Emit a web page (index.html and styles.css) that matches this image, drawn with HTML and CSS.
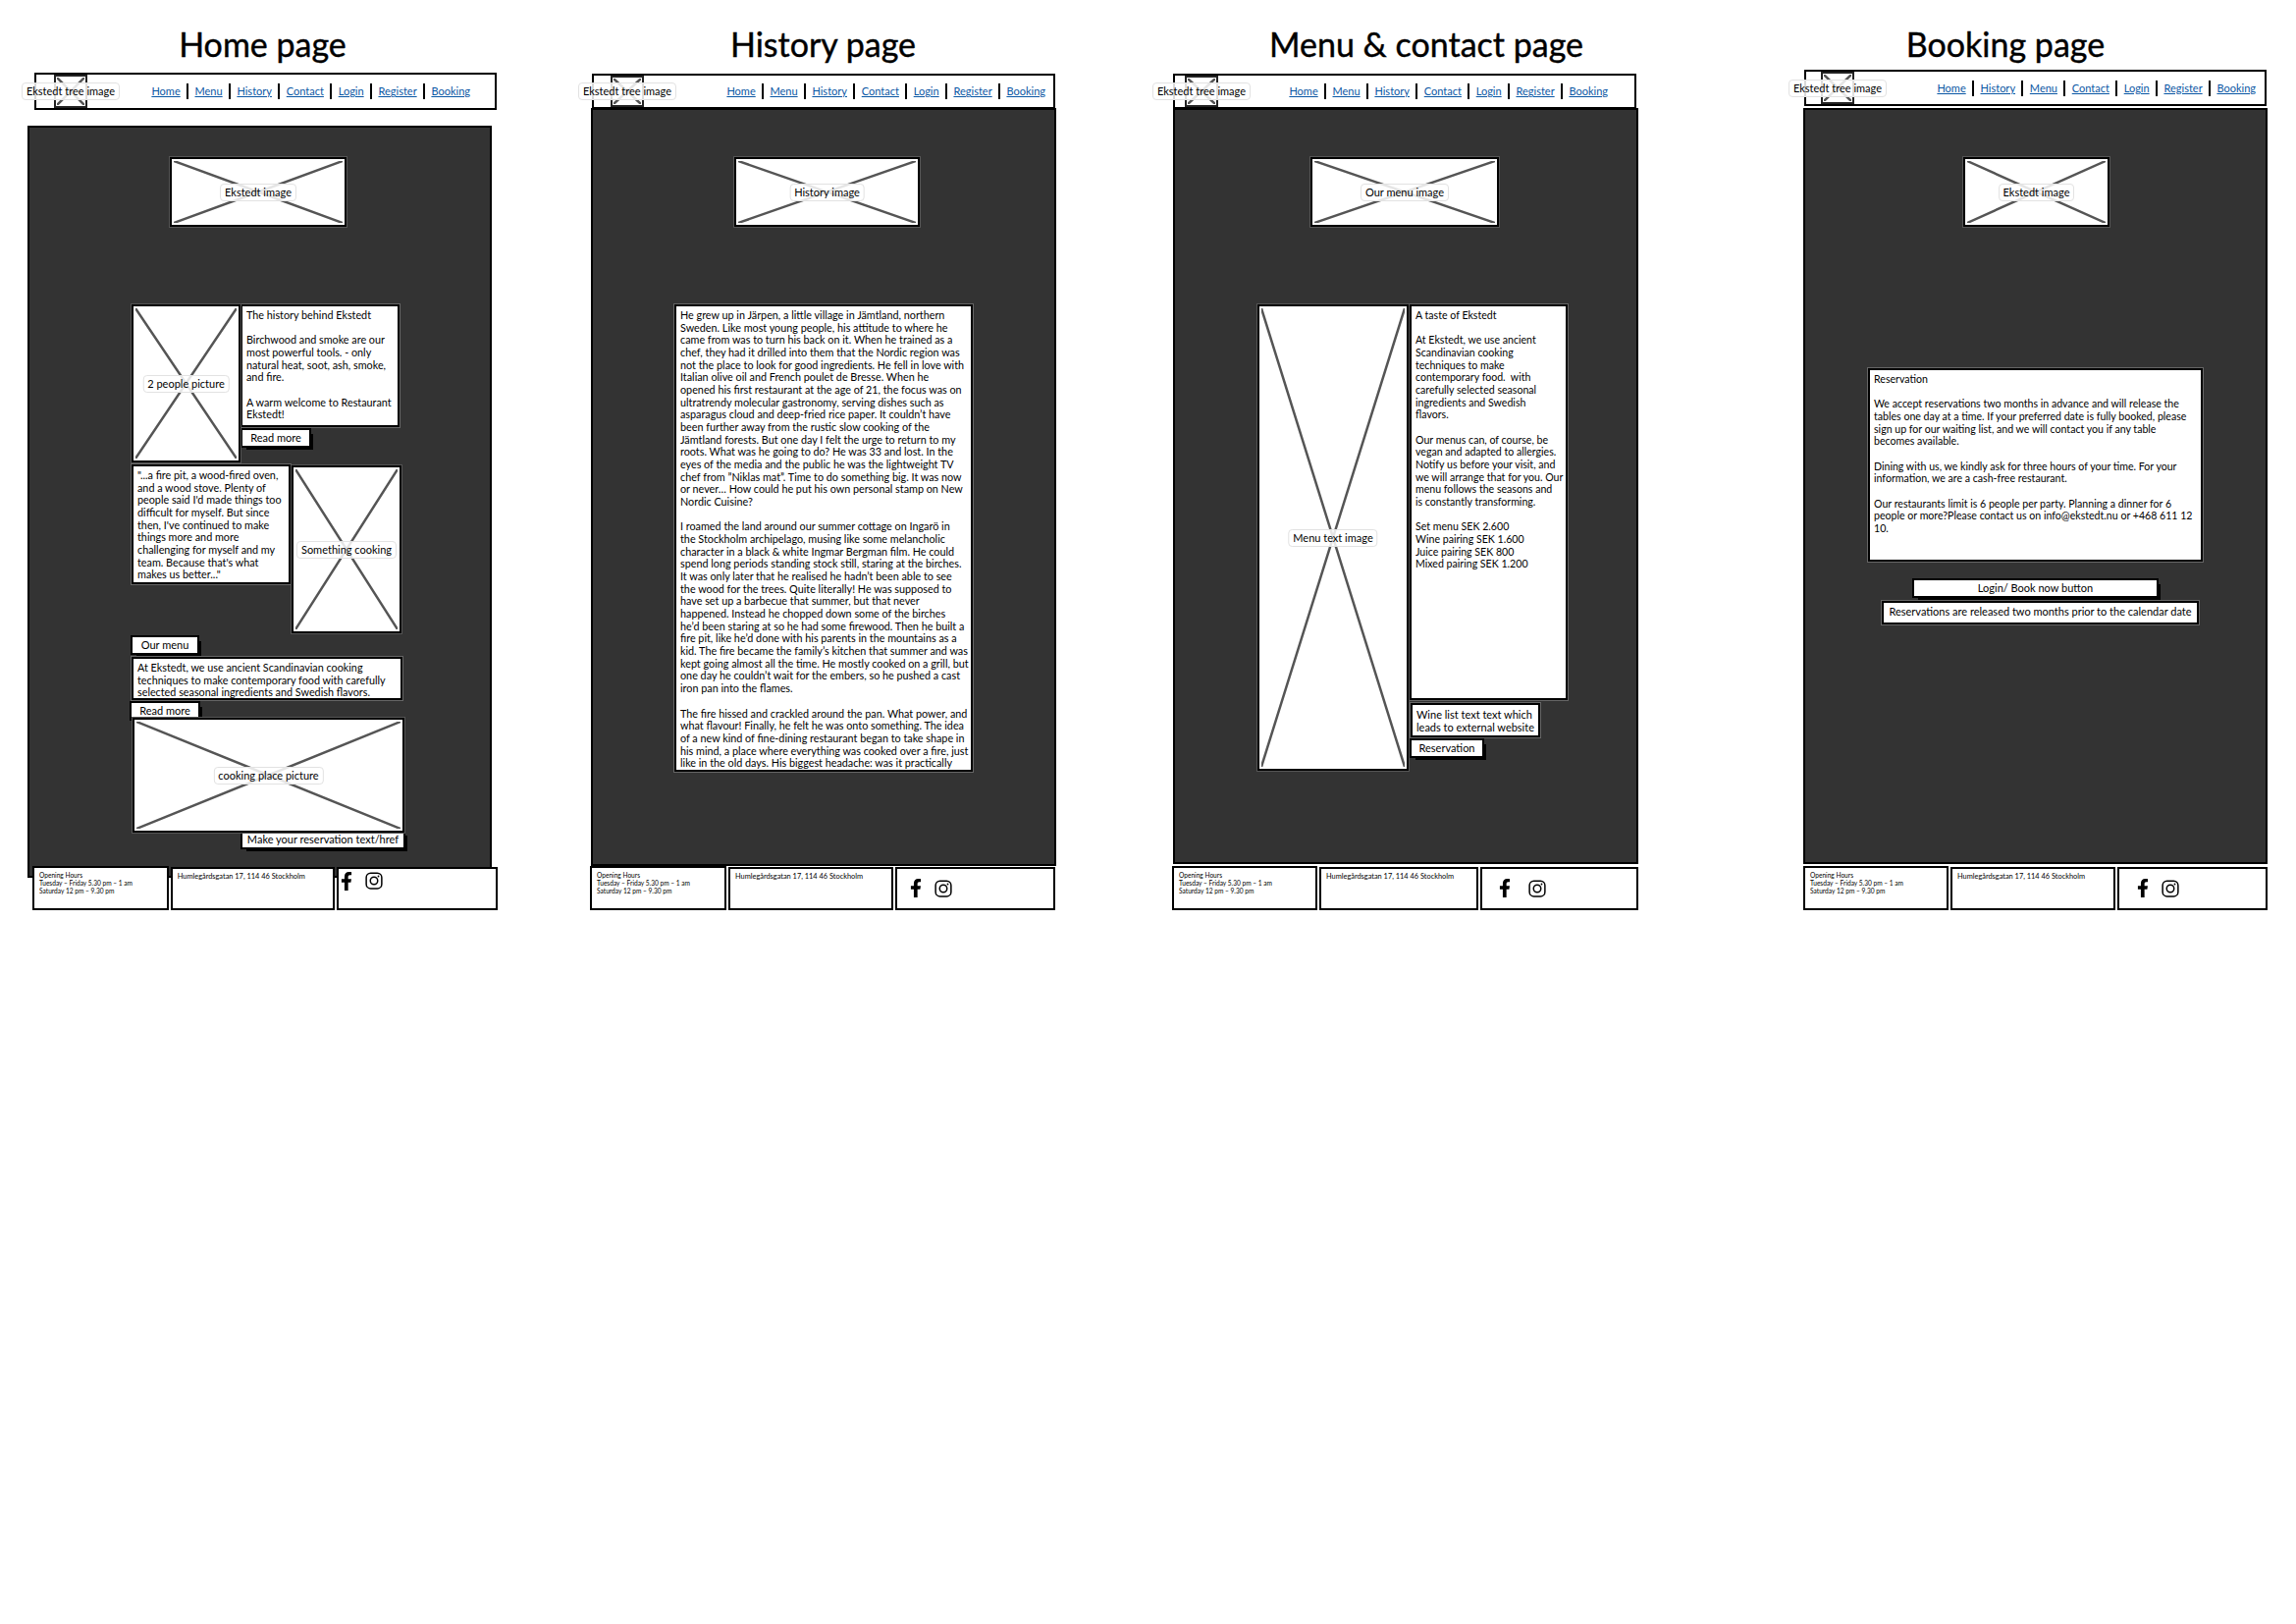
FILE: index.html
```html
<!DOCTYPE html>
<html lang="en">
<head>
    <meta charset="UTF-8">
    <meta name="viewport" content="width=device-width, initial-scale=1.0">
    <title>Ekstedt wireframes</title>
    <link rel="stylesheet" href="styles.css">
</head>
<body>
<div class="board">

    <!-- home -->
    <section class="screen screen-home">
        <h1 class="page-title">Home page</h1>
        <nav class="nav">
            <div class="logo">
                <svg class="cross" viewBox="0 0 100 100" preserveAspectRatio="none"><path d="M0 0 100 100M100 0 0 100"/></svg>
                <span class="ph-label">Ekstedt tree image</span>
            </div>
            <div class="nav-links">
                <a href="#">Home</a><a href="#">Menu</a><a href="#">History</a><a href="#">Contact</a><a href="#">Login</a><a href="#">Register</a><a href="#">Booking</a>
            </div>
        </nav>
        <main class="main">
            <div class="ph hero">
                <svg class="cross" viewBox="0 0 100 100" preserveAspectRatio="none"><path d="M0 0 100 100M100 0 0 100"/></svg>
                <span class="ph-label">Ekstedt image</span>
            </div>
            <div class="home-col">
                <div class="row row-history">
                    <div class="ph people">
                        <svg class="cross" viewBox="0 0 100 100" preserveAspectRatio="none"><path d="M0 0 100 100M100 0 0 100"/></svg>
                        <span class="ph-label">2 people picture</span>
                    </div>
                    <div>
                        <div class="box card-history">The history behind Ekstedt<br><br>Birchwood and smoke are our<br>most powerful tools. - only<br>natural heat, soot, ash, smoke,<br>and fire.<br><br>A warm welcome to Restaurant<br>Ekstedt!</div>
                        <div class="btn btn-read">Read more</div>
                    </div>
                </div>
                <div class="row row-quote">
                    <div class="box card-quote">"...a fire pit, a wood-fired oven,<br>and a wood stove. Plenty of<br>people said I'd made things too<br>difficult for myself. But since<br>then, I've continued to make<br>things more and more<br>challenging for myself and my<br>team. Because that's what<br>makes us better..."</div>
                    <div class="ph cooking">
                        <svg class="cross" viewBox="0 0 100 100" preserveAspectRatio="none"><path d="M0 0 100 100M100 0 0 100"/></svg>
                        <span class="ph-label">Something cooking</span>
                    </div>
                </div>
                <div class="btn btn-menu">Our menu</div>
                <div class="box card-menu">At Ekstedt, we use ancient Scandinavian cooking<br>techniques to make contemporary food with carefully<br>selected seasonal ingredients and Swedish flavors.</div>
                <div class="btn btn-read2">Read more</div>
                <div class="ph place">
                    <svg class="cross" viewBox="0 0 100 100" preserveAspectRatio="none"><path d="M0 0 100 100M100 0 0 100"/></svg>
                    <span class="ph-label">cooking place picture</span>
                </div>
                <div class="btn btn-reserve">Make your reservation text/href</div>
            </div>
        </main>
        <footer class="footer">
            <div class="foot-box foot-hours">Opening Hours<br>Tuesday – Friday 5.30 pm – 1 am<br>Saturday 12 pm – 9.30 pm</div>
            <div class="foot-box foot-address">Humlegårdsgatan 17, 114 46 Stockholm</div>
            <div class="foot-box foot-social">
                <svg class="icon-f" viewBox="0 0 320 512"><path d="M279.14 288l14.22-92.66h-88.91v-60.13c0-25.35 12.42-50.06 52.24-50.06h40.42V6.26S260.43 0 225.36 0c-73.22 0-121.08 44.38-121.08 124.72v70.62H22.89V288h81.39v224h100.17V288z"/></svg>
                <svg class="icon-ig" viewBox="0 0 24 24"><rect x="1.5" y="1.5" width="21" height="21" rx="6"/><circle cx="12" cy="12" r="5"/><circle class="ig-dot" cx="18" cy="6" r="1.2"/></svg>
            </div>
        </footer>
    </section>

    <!-- history -->
    <section class="screen screen-history">
        <h1 class="page-title">History page</h1>
        <nav class="nav">
            <div class="logo">
                <svg class="cross" viewBox="0 0 100 100" preserveAspectRatio="none"><path d="M0 0 100 100M100 0 0 100"/></svg>
                <span class="ph-label">Ekstedt tree image</span>
            </div>
            <div class="nav-links">
                <a href="#">Home</a><a href="#">Menu</a><a href="#">History</a><a href="#">Contact</a><a href="#">Login</a><a href="#">Register</a><a href="#">Booking</a>
            </div>
        </nav>
        <main class="main">
            <div class="ph hero">
                <svg class="cross" viewBox="0 0 100 100" preserveAspectRatio="none"><path d="M0 0 100 100M100 0 0 100"/></svg>
                <span class="ph-label">History image</span>
            </div>
            <div class="box card-story">He grew up in Järpen, a little village in Jämtland, northern<br>Sweden. Like most young people, his attitude to where he<br>came from was to turn his back on it. When he trained as a<br>chef, they had it drilled into them that the Nordic region was<br>not the place to look for good ingredients. He fell in love with<br>Italian olive oil and French poulet de Bresse. When he<br>opened his first restaurant at the age of 21, the focus was on<br>ultratrendy molecular gastronomy, serving dishes such as<br>asparagus cloud and deep-fried rice paper. It couldn’t have<br>been further away from the rustic slow cooking of the<br>Jämtland forests. But one day I felt the urge to return to my<br>roots. What was he going to do? He was 33 and lost. In the<br>eyes of the media and the public he was the lightweight TV<br>chef from ”Niklas mat”. Time to do something big. It was now<br>or never… How could he put his own personal stamp on New<br>Nordic Cuisine?<br><br>I roamed the land around our summer cottage on Ingarö in<br>the Stockholm archipelago, musing like some melancholic<br>character in a black &amp; white Ingmar Bergman film. He could<br>spend long periods standing stock still, staring at the birches.<br>It was only later that he realised he hadn’t been able to see<br>the wood for the trees. Quite literally! He was supposed to<br>have set up a barbecue that summer, but that never<br>happened. Instead he chopped down some of the birches<br>he’d been staring at so he had some firewood. Then he built a<br>fire pit, like he’d done with his parents in the mountains as a<br>kid. The fire became the family’s kitchen that summer and was<br>kept going almost all the time. He mostly cooked on a grill, but<br>one day he couldn’t wait for the embers, so he pushed a cast<br>iron pan into the flames.<br><br>The fire hissed and crackled around the pan. What power, and<br>what flavour! Finally, he felt he was onto something. The idea<br>of a new kind of fine-dining restaurant began to take shape in<br>his mind, a place where everything was cooked over a fire, just<br>like in the old days. His biggest headache: was it practically</div>
        </main>
        <footer class="footer">
            <div class="foot-box foot-hours">Opening Hours<br>Tuesday – Friday 5.30 pm – 1 am<br>Saturday 12 pm – 9.30 pm</div>
            <div class="foot-box foot-address">Humlegårdsgatan 17, 114 46 Stockholm</div>
            <div class="foot-box foot-social">
                <svg class="icon-f" viewBox="0 0 320 512"><path d="M279.14 288l14.22-92.66h-88.91v-60.13c0-25.35 12.42-50.06 52.24-50.06h40.42V6.26S260.43 0 225.36 0c-73.22 0-121.08 44.38-121.08 124.72v70.62H22.89V288h81.39v224h100.17V288z"/></svg>
                <svg class="icon-ig" viewBox="0 0 24 24"><rect x="1.5" y="1.5" width="21" height="21" rx="6"/><circle cx="12" cy="12" r="5"/><circle class="ig-dot" cx="18" cy="6" r="1.2"/></svg>
            </div>
        </footer>
    </section>

    <!-- menu and contact -->
    <section class="screen screen-menu">
        <h1 class="page-title">Menu &amp; contact page</h1>
        <nav class="nav">
            <div class="logo">
                <svg class="cross" viewBox="0 0 100 100" preserveAspectRatio="none"><path d="M0 0 100 100M100 0 0 100"/></svg>
                <span class="ph-label">Ekstedt tree image</span>
            </div>
            <div class="nav-links">
                <a href="#">Home</a><a href="#">Menu</a><a href="#">History</a><a href="#">Contact</a><a href="#">Login</a><a href="#">Register</a><a href="#">Booking</a>
            </div>
        </nav>
        <main class="main">
            <div class="ph hero">
                <svg class="cross" viewBox="0 0 100 100" preserveAspectRatio="none"><path d="M0 0 100 100M100 0 0 100"/></svg>
                <span class="ph-label">Our menu image</span>
            </div>
            <div class="row row-taste">
                <div class="ph menu-pic">
                    <svg class="cross" viewBox="0 0 100 100" preserveAspectRatio="none"><path d="M0 0 100 100M100 0 0 100"/></svg>
                    <span class="ph-label">Menu text image</span>
                </div>
                <div class="taste-col">
                    <div class="box card-taste">A taste of Ekstedt<br><br>At Ekstedt, we use ancient<br>Scandinavian cooking<br>techniques to make<br>contemporary food.&nbsp; with<br>carefully selected seasonal<br>ingredients and Swedish<br>flavors.<br><br>Our menus can, of course, be<br>vegan and adapted to allergies.<br>Notify us before your visit, and<br>we will arrange that for you. Our<br>menu follows the seasons and<br>is constantly transforming.<br><br>Set menu SEK 2.600<br>Wine pairing SEK 1.600<br>Juice pairing SEK 800<br>Mixed pairing SEK 1.200</div>
                    <div class="box card-wine">Wine list text text which<br>leads to external website</div>
                    <div class="btn btn-booking">Reservation</div>
                </div>
            </div>
        </main>
        <footer class="footer">
            <div class="foot-box foot-hours">Opening Hours<br>Tuesday – Friday 5.30 pm – 1 am<br>Saturday 12 pm – 9.30 pm</div>
            <div class="foot-box foot-address">Humlegårdsgatan 17, 114 46 Stockholm</div>
            <div class="foot-box foot-social">
                <svg class="icon-f" viewBox="0 0 320 512"><path d="M279.14 288l14.22-92.66h-88.91v-60.13c0-25.35 12.42-50.06 52.24-50.06h40.42V6.26S260.43 0 225.36 0c-73.22 0-121.08 44.38-121.08 124.72v70.62H22.89V288h81.39v224h100.17V288z"/></svg>
                <svg class="icon-ig" viewBox="0 0 24 24"><rect x="1.5" y="1.5" width="21" height="21" rx="6"/><circle cx="12" cy="12" r="5"/><circle class="ig-dot" cx="18" cy="6" r="1.2"/></svg>
            </div>
        </footer>
    </section>

    <!-- booking -->
    <section class="screen screen-booking">
        <h1 class="page-title">Booking page</h1>
        <nav class="nav">
            <div class="logo">
                <svg class="cross" viewBox="0 0 100 100" preserveAspectRatio="none"><path d="M0 0 100 100M100 0 0 100"/></svg>
                <span class="ph-label">Ekstedt tree image</span>
            </div>
            <div class="nav-links">
                <a href="#">Home</a><a href="#">History</a><a href="#">Menu</a><a href="#">Contact</a><a href="#">Login</a><a href="#">Register</a><a href="#">Booking</a>
            </div>
        </nav>
        <main class="main">
            <div class="ph hero">
                <svg class="cross" viewBox="0 0 100 100" preserveAspectRatio="none"><path d="M0 0 100 100M100 0 0 100"/></svg>
                <span class="ph-label">Ekstedt image</span>
            </div>
            <div class="box card-reservation">Reservation<br><br>We accept reservations two months in advance and will release the<br>tables one day at a time. If your preferred date is fully booked, please<br>sign up for our waiting list, and we will contact you if any table<br>becomes available.<br><br>Dining with us, we kindly ask for three hours of your time. For your<br>information, we are a cash-free restaurant.<br><br>Our restaurants limit is 6 people per party. Planning a dinner for 6<br>people or more?Please contact us on info@ekstedt.nu or +468 611 12<br>10.</div>
            <div class="btn btn-login">Login/ Book now button</div>
            <div class="box card-notice">Reservations are released two months prior to the calendar date</div>
        </main>
        <footer class="footer">
            <div class="foot-box foot-hours">Opening Hours<br>Tuesday – Friday 5.30 pm – 1 am<br>Saturday 12 pm – 9.30 pm</div>
            <div class="foot-box foot-address">Humlegårdsgatan 17, 114 46 Stockholm</div>
            <div class="foot-box foot-social">
                <svg class="icon-f" viewBox="0 0 320 512"><path d="M279.14 288l14.22-92.66h-88.91v-60.13c0-25.35 12.42-50.06 52.24-50.06h40.42V6.26S260.43 0 225.36 0c-73.22 0-121.08 44.38-121.08 124.72v70.62H22.89V288h81.39v224h100.17V288z"/></svg>
                <svg class="icon-ig" viewBox="0 0 24 24"><rect x="1.5" y="1.5" width="21" height="21" rx="6"/><circle cx="12" cy="12" r="5"/><circle class="ig-dot" cx="18" cy="6" r="1.2"/></svg>
            </div>
        </footer>
    </section>
</div>
</body>
</html>
```

FILE: styles.css
```css
* {
    box-sizing: border-box;
}
body {
    margin: 0;
    background-color: #fff;
    color: #000;
    font-family: Lato, "Noto Sans", sans-serif;
    font-size: 10.8px;
    line-height: 12.67px;
}
.board {
    display: flex;
    align-items: flex-start;
    padding-left: 28px;
}
.screen {
    flex: none;
    white-space: nowrap;
}
.screen-home { width: 479px; }
.screen-history { width: 475px; margin-left: 94px; }
.screen-menu { width: 475px; margin-left: 118px; }
.screen-booking { width: 473px; margin-left: 168px; }

.page-title {
    height: 70px;
    margin: 0;
    padding-top: 27px;
    font-size: 34px;
    line-height: 36px;
    font-weight: 400;
    -webkit-text-stroke: 0.4px #000;
    text-align: center;
}
.screen-menu .page-title { padding-left: 43px; }
.screen-booking .page-title { padding-right: 61px; }

/* nav */
.nav {
    display: flex;
    align-items: center;
    height: 35px;
    background: #fff;
    border: 2px solid #000;
    border-bottom-width: 1px;
    margin-top: 5px;
}
.screen-home .nav { width: 471px; height: 38px; margin-top: 4px; margin-left: 7px; border-bottom-width: 2px; }
.screen-booking .nav { width: 471px; height: 37px; margin-top: 1px; margin-bottom: 2px; margin-left: 1px; border-bottom-width: 2px; }
.screen-history .nav { width: 472px; margin-left: 2px; }
.screen-menu .nav { width: 472px; margin-left: 1px; }

.logo {
    position: relative;
    flex: none;
    width: 34px;
    height: 100%;
    padding: 1px;
    border: 2px solid #222;
}
.screen-home .logo { margin-left: 18px; }
.screen-history .logo { margin-left: 17px; }
.screen-menu .logo { margin-left: 10px; }
.screen-booking .logo { margin-left: 15px; }

.nav-links {
    display: flex;
    margin-left: auto;
    font-size: 11px;
}
.screen-home .nav-links { padding-right: 18.6px; }
.screen-history .nav-links { padding-right: 1.6px; }
.screen-menu .nav-links { padding-right: 20.6px; }
.screen-booking .nav-links { padding-right: 2.6px; }
.nav-links a {
    padding: 0 6.4px;
    line-height: 16px;
    color: #0b57a4;
}
.nav-links a + a {
    border-left: 2px solid #000;
}

/* placeholder images */
.ph {
    position: relative;
    background: #fff;
    border: 2px solid #000;
    box-shadow: 0 0 0 1px #555;
    padding: 2px;
}
.cross {
    display: block;
    width: 100%;
    height: 100%;
}
.cross path {
    fill: none;
    stroke: #555;
    stroke-width: 2.5px;
    vector-effect: non-scaling-stroke;
}
.ph-label {
    position: absolute;
    top: 50%;
    left: 50%;
    transform: translate(-50%, -50%);
    padding: 1px 4px;
    background: rgba(255, 255, 255, 0.85);
    border: 1px solid #e2e2e2;
    border-radius: 4px;
    font-size: 11px;
    line-height: 14px;
}

/* main area */
.main {
    background-color: #333;
    border: 2px solid #000;
    padding-top: 48px;
}
.screen-home .main { width: 473px; height: 766px; margin-top: 16px; padding-top: 30px; }
.screen-history .main { width: 474px; height: 772px; margin-left: 1px; }
.screen-menu .main { width: 474px; height: 770px; margin-left: 1px; }
.screen-booking .main { width: 473px; height: 770px; }

.hero { height: 71px; }
.screen-home .hero { width: 180px; margin-left: 143px; }
.screen-history .hero { width: 189px; margin-left: 144px; }
.screen-menu .hero { width: 192px; margin-left: 138px; }
.screen-booking .hero { width: 149px; margin-left: 161px; }

.box {
    background: #fff;
    border: 2px solid #000;
    box-shadow: 0 0 0 1px #666;
    padding: 3px 4px;
}
.btn {
    background: #fff;
    box-shadow: 4px 4px 0 #000, 0 0 0 2px #000;
    font-size: 11px;
    line-height: 16px;
    height: 16px;
    text-align: center;
}
.row {
    display: flex;
    align-items: flex-start;
}

/* home content */
.home-col {
    width: 280px;
    margin-top: 79px;
    margin-left: 104px;
}
.row-history { height: 161px; }
.people { width: 111px; height: 161px; }
.card-history { width: 162px; height: 125px; }
.btn-read { width: 68px; margin-top: 3px; margin-left: 2px; }
.row-quote { height: 172px; margin-top: 2px; gap: 1px; }
.card-quote { width: 162px; height: 122px; }
.cooking { width: 112px; height: 171px; margin-top: 1px; }
.btn-menu { width: 66px; margin-top: 4px; margin-left: 1px; }
.card-menu { width: 276px; height: 44px; margin-top: 4px; overflow: hidden; }
.btn-read2 { width: 68px; margin-top: 3px; }
.place { width: 277px; height: 117px; margin-top: -1px; margin-left: 1px; }
.btn-reserve { width: 164px; margin-top: -1px; margin-left: 113px; }

/* history content */
.card-story {
    width: 304px;
    height: 476px;
    margin-top: 79px;
    margin-left: 83px;
    overflow: hidden;
}

/* menu content */
.row-taste { margin-top: 79px; margin-left: 84px; gap: 1px; }
.menu-pic { width: 154px; height: 475px; }
.taste-col { width: 161px; }
.card-taste { height: 403px; font-size: 10.6px; }
.card-wine { width: 132px; height: 35px; margin-top: 3px; margin-left: 1px; padding-top: 4px; font-size: 11px; }
.btn-booking { width: 72px; margin-top: 3px; margin-left: 2px; }

/* booking content */
.card-reservation { width: 341px; height: 197px; margin-top: 144px; margin-left: 64px; font-size: 10.6px; }
.btn-login { width: 247px; margin-top: 19px; margin-left: 111px; }
.card-notice { width: 323px; height: 24px; margin-top: 5px; margin-left: 78px; font-size: 11px; text-align: center; }

/* footer */
.footer {
    display: flex;
    align-items: center;
    gap: 2px;
}
.screen-home .footer { margin-top: -12px; margin-left: 5px; }
.screen-menu .footer { margin-top: 2px; }
.screen-booking .footer { margin-top: 2px; }
.foot-box {
    height: 44px;
    background: #fff;
    border: 2px solid #000;
    padding: 4px 5px;
    font-size: 7.4px;
    line-height: 8px;
}
.foot-hours { height: 45px; padding-top: 3px; font-size: 6.6px; }
.foot-social {
    display: flex;
    align-items: center;
    gap: 13px;
}
.icon-f { width: 12px; height: 19px; }
.icon-ig {
    width: 18px;
    height: 18px;
    fill: none;
    stroke: #000;
    stroke-width: 2px;
}
.ig-dot { fill: #000; stroke: none; }

.screen-home .foot-hours { width: 139px; }
.screen-home .foot-address { width: 168px; }
.screen-home .foot-social { width: 164px; align-items: flex-start; padding: 3px 0 0 2px; }
.screen-history .foot-hours { width: 139px; }
.screen-history .foot-address { width: 168px; }
.screen-history .foot-social { width: 163px; padding-left: 13px; }
.screen-menu .foot-hours { width: 148px; }
.screen-menu .foot-address { width: 162px; }
.screen-menu .foot-social { width: 161px; padding-left: 17px; gap: 18px; }
.screen-booking .foot-hours { width: 148px; }
.screen-booking .foot-address { width: 168px; }
.screen-booking .foot-social { width: 153px; padding-left: 18px; }
```
